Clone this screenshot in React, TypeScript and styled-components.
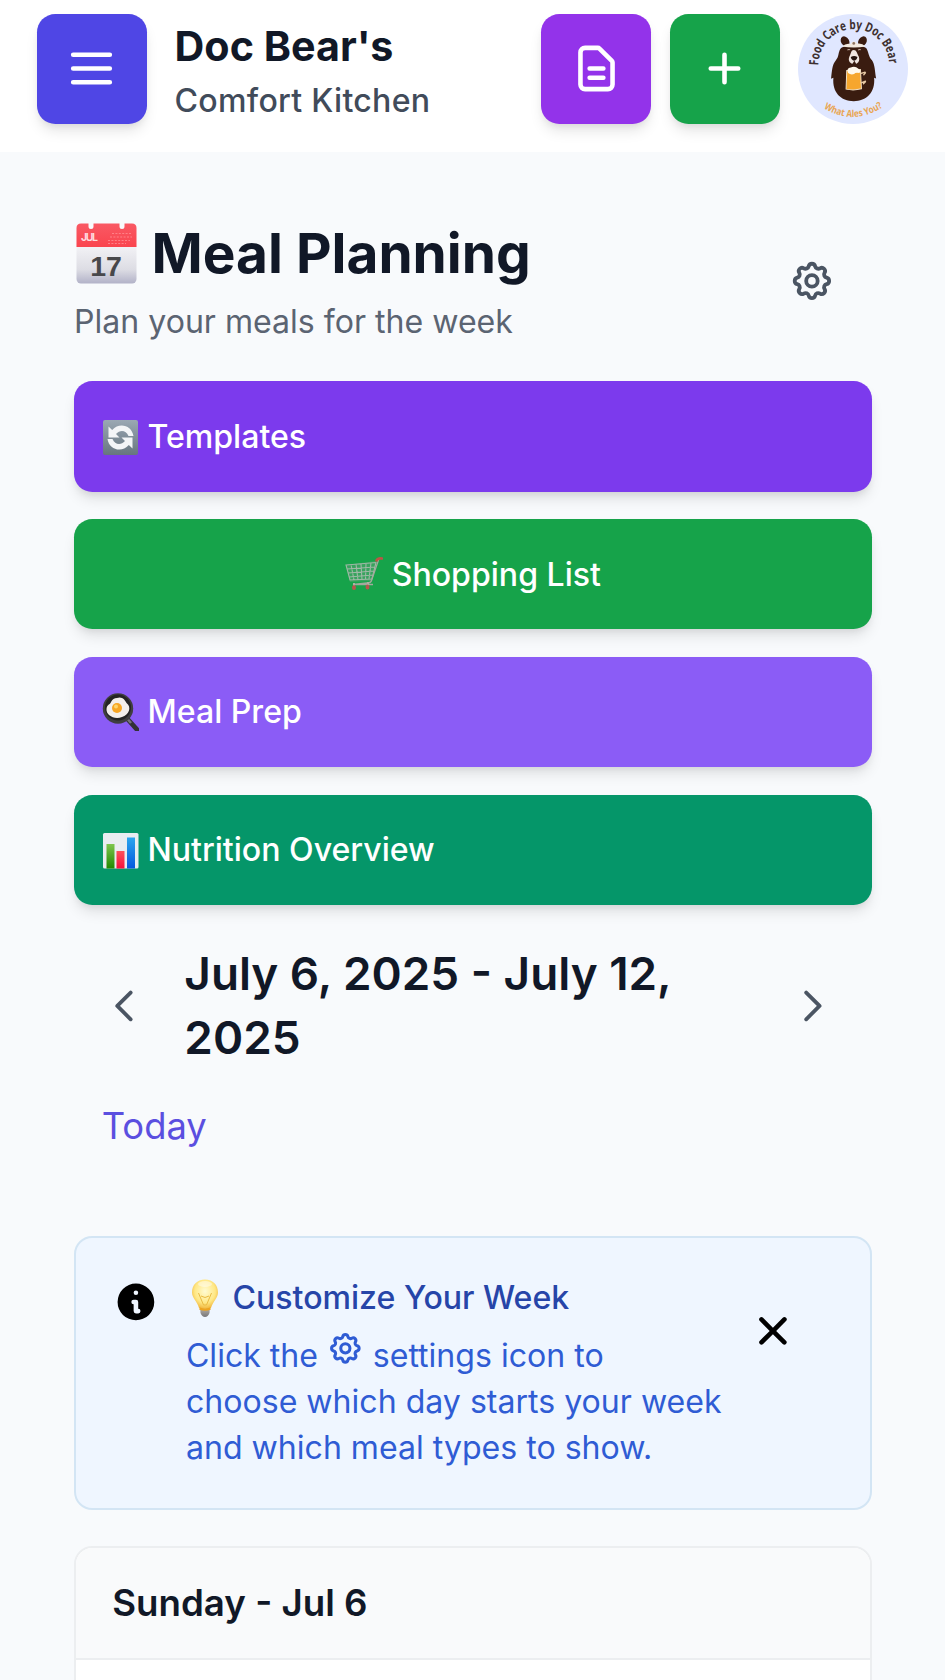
import React from 'react';
import styled, { createGlobalStyle } from 'styled-components';

const GlobalStyle = createGlobalStyle`
  *, *::before, *::after { box-sizing: border-box; }
  body {
    margin: 0;
    background: #f8fafc;
    font-family: Inter, "Liberation Sans", sans-serif;
    color: #111827;
  }
  h1, h2, h3, p { margin: 0; }
  button { border: 0; background: none; padding: 0; font: inherit; color: inherit; }
  svg { display: block; flex-shrink: 0; }
`;

const liftedShadow = '0 9px 14px -2px rgba(0,0,0,0.1), 0 4.6px 9px -4.6px rgba(0,0,0,0.1)';

const Page = styled.div`
  width: 945px;
  height: 1680px;
  overflow: hidden;
`;

const Header = styled.header`
  display: flex;
  align-items: flex-start;
  gap: 18.3px;
  height: 151.5px;
  padding: 14px 36.7px 0;
  background: #fff;
`;

const SquareButton = styled.button<{ $color: string }>`
  display: flex;
  align-items: center;
  justify-content: center;
  flex: none;
  width: 110.2px;
  height: 110.2px;
  padding-bottom: 1.4px;
  border-radius: 18.3px;
  color: #fff;
  background: ${(p) => p.$color};
  box-shadow: ${liftedShadow};
`;

const Brand = styled.div`
  flex: 1;
  padding: 6.5px 0 0 9.4px;
  white-space: nowrap;
`;

const BrandName = styled.h1`
  font-size: 41.25px;
  line-height: 51.6px;
  font-weight: 700;
`;

const BrandTag = styled.p`
  margin-top: 6.2px;
  font-size: 32.1px;
  line-height: 46px;
  font-weight: 500;
  letter-spacing: 0.28px;
  color: #414b5a;
`;

const Avatar = styled.div`
  flex: none;
  width: 110.2px;
  height: 110.2px;
  border-radius: 50%;
  overflow: hidden;
  background: #e0e7ff;
`;

const Main = styled.main`
  padding: 65.2px 73.3px 0 73.5px;
`;

const TitleRow = styled.section`
  display: flex;
  align-items: center;
  justify-content: space-between;
  padding-right: 37px;
  color: #4b5563;
`;

const Title = styled.h2`
  display: flex;
  align-items: center;
  gap: 15px;
  padding-left: 2px;
  font-size: 55px;
  line-height: 73px;
  font-weight: 700;
  color: #111827;
`;

const Subtitle = styled.p`
  margin-top: 9.5px;
  padding-left: 0.5px;
  font-size: 32.1px;
  line-height: 46px;
  color: #5b6472;
`;

const Actions = styled.div`
  display: flex;
  flex-direction: column;
  gap: 27.4px;
  margin-top: 36.3px;
`;

const ActionButton = styled.button<{ $color: string; $centered?: boolean }>`
  display: flex;
  align-items: center;
  justify-content: ${(p) => (p.$centered ? 'center' : 'flex-start')};
  gap: 9px;
  height: 110.3px;
  padding: 0.8px 27.5px 0 28px;
  border-radius: 18.3px;
  font-size: 32.1px;
  line-height: 46px;
  font-weight: 500;
  color: #fff;
  background: ${(p) => p.$color};
  box-shadow: ${liftedShadow};
`;

const WeekNav = styled.div`
  display: flex;
  align-items: center;
  margin-top: 37.1px;
  padding: 0 37px 0 28.2px;
  color: #4b5563;
`;

const WeekRange = styled.h2`
  flex: 1;
  margin-left: 36.8px;
  padding-right: 100px;
  font-size: 45.85px;
  line-height: 64.3px;
  font-weight: 600;
  color: #111827;
`;

const TodayLink = styled.button`
  display: block;
  margin: 28px 0 0 28.2px;
  font-size: 36.4px;
  line-height: 55px;
  color: #5b4fe0;
`;

const Tip = styled.section`
  display: flex;
  align-items: flex-start;
  margin-top: 82.1px;
  height: 274px;
  padding: 37.2px 73.5px 0 37px;
  border: 2px solid #d3e5f4;
  border-radius: 18.3px;
  background: #eff6ff;
`;

const TipIcon = styled.span`
  padding-top: 4.6px;
  color: #000;
`;

const TipBody = styled.div`
  flex: 1;
  margin-left: 27.6px;
  white-space: nowrap;
`;

const TipTitle = styled.h3`
  display: flex;
  align-items: center;
  gap: 9.5px;
  font-size: 32.1px;
  line-height: 46px;
  font-weight: 500;
  color: #2645a8;
`;

const TipText = styled.p`
  margin-top: 9.2px;
  font-size: 32.1px;
  line-height: 46px;
  color: #2f5cd4;
  svg { display: inline-block; vertical-align: baseline; }
`;

const TipClose = styled.button`
  margin-top: 32.8px;
  color: #000;
`;

const DayCard = styled.section`
  height: 220px;
  margin-top: 36.2px;
  border: 2px solid #eceef0;
  border-radius: 18.3px;
  overflow: hidden;
  background: #fff;
`;

const DayHeader = styled.h3`
  padding: 27px 36.7px 28px;
  border-bottom: 2px solid #eceef0;
  background: #f9fafb;
  font-size: 36.7px;
  line-height: 55px;
  font-weight: 600;
`;

type StrokeIconProps = { size: number; paths: string[] };

const StrokeIcon = ({ size, paths }: StrokeIconProps) => (
  <svg width={size} height={size} viewBox="0 0 24 24" fill="none" stroke="currentColor" strokeWidth={2} strokeLinecap="round" strokeLinejoin="round">
    {paths.map((d) => (
      <path key={d} d={d} />
    ))}
  </svg>
);

const SolidIcon = ({ d }: { d: string }) => (
  <svg width={45.85} height={45.85} viewBox="0 0 20 20" fill="currentColor">
    <path fillRule="evenodd" clipRule="evenodd" d={d} />
  </svg>
);

const COG = [
  'M10.325 4.317c.426-1.756 2.924-1.756 3.35 0a1.724 1.724 0 002.573 1.066c1.543-.94 3.31.826 2.37 2.37a1.724 1.724 0 001.065 2.572c1.756.426 1.756 2.924 0 3.35a1.724 1.724 0 00-1.066 2.573c.94 1.543-.826 3.31-2.37 2.37a1.724 1.724 0 00-2.572 1.065c-.426 1.756-2.924 1.756-3.35 0a1.724 1.724 0 00-2.573-1.066c-1.543.94-3.31-.826-2.37-2.37a1.724 1.724 0 00-1.065-2.572c-1.756-.426-1.756-2.924 0-3.35a1.724 1.724 0 001.066-2.573c-.94-1.543.826-3.31 2.37-2.37.996.608 2.296.07 2.572-1.065z',
  'M15 12a3 3 0 11-6 0 3 3 0 016 0z',
];
const MENU = ['M4 6h16M4 12h16M4 18h16'];
const DOCUMENT = [
  'M9 12h6m-6 4h6m2 5H7a2 2 0 01-2-2V5a2 2 0 012-2h5.586a1 1 0 01.707.293l5.414 5.414a1 1 0 01.293.707V19a2 2 0 01-2 2z',
];
const PLUS = ['M12 6v12M6 12h12'];
const PREVIOUS = ['M15 19l-7-7 7-7'];
const NEXT = ['M9 5l7 7-7 7'];
const INFO =
  'M18 10a8 8 0 11-16 0 8 8 0 0116 0zm-7-4a1 1 0 11-2 0 1 1 0 012 0zM9 9a1 1 0 000 2v3a1 1 0 001 1h1a1 1 0 100-2v-3a1 1 0 00-1-1H9z';
const CLOSE =
  'M4.293 4.293a1 1 0 011.414 0L10 8.586l4.293-4.293a1 1 0 111.414 1.414L11.414 10l4.293 4.293a1 1 0 01-1.414 1.414L10 11.414l-4.293 4.293a1 1 0 01-1.414-1.414L8.586 10 4.293 5.707a1 1 0 010-1.414z';

const BearLogo = () => (
  <svg width="100%" height="100%" viewBox="40 42 330 330">
    <defs>
      <path id="logo-top" d="M101 196A106 109 0 0 1 313 196" />
      <path id="logo-bottom" d="M114 322Q207 382 301 316" />
    </defs>
    <text fill="#3d302f" fontFamily="Open Sans, sans-serif" fontWeight={700} fontSize={39}>
      <textPath href="#logo-top" textLength={332} lengthAdjust="spacingAndGlyphs">Food Care by Doc Bear</textPath>
    </text>
    <text fill="#e9a552" fontFamily="Open Sans, sans-serif" fontWeight={700} fontSize={29}>
      <textPath href="#logo-bottom" startOffset={4} textLength={188} lengthAdjust="spacingAndGlyphs">What Ales You?</textPath>
    </text>
    <g fill="#3a1c10">
      <ellipse cx="181" cy="124" rx="12" ry="16" transform="rotate(-32 181 124)" />
      <ellipse cx="233" cy="124" rx="12" ry="16" transform="rotate(32 233 124)" />
      <path d="M165 150C171 136 188 139 207 139C228 139 243 137 248 151C253 164 253 171 261 180C271 193 270 215 274 235L268 233C272 278 244 303 207 303C168 303 142 277 146 233L139 236C142 211 142 194 153 181C162 171 160 162 165 150Z" />
    </g>
    <path d="M172 139Q184 128 198 132A10 10 0 0 1 217 131Q230 128 243 139Q207 145 172 139Z" fill="#f3eadf" />
    <circle cx="207" cy="130" r="4" fill="#8d7261" />
    <path d="M207 150C216 150 216 160 222 169C226 181 221 188 214 191L209 182L203 191C195 188 189 181 194 169C200 160 198 150 207 150Z" fill="#efe5df" />
    <path d="M198 171Q208 165 218 171Q216 181 208 182Q200 181 198 171Z" fill="#23120d" />
    <path d="M188 150q5-4 8 0M220 150q5-4 8 0" stroke="#c9b5a8" strokeWidth="3" fill="none" />
    <path d="M186 211L227 208L230 266Q207 272 184 267Z" fill="#f6a62d" stroke="#f1dfc4" strokeWidth="3" />
    <path d="M190 219Q184 204 198 202Q211 196 221 206Q230 211 224 219Q212 216 208 222Q198 225 190 219Z" fill="#fff8eb" />
    <path d="M229 220L241 216M229 248L242 243M242 218l-5 6M242 245l-6 6" stroke="#e6c9a5" strokeWidth="4" strokeLinecap="round" />
  </svg>
);

const CalendarEmoji = () => (
  <svg width={61} height={62} viewBox="0 -1 61 62">
    <defs>
      <linearGradient id="cal-paper" x1="0" y1="0" x2="0" y2="1">
        <stop offset="0" stopColor="#f5f5f8" />
        <stop offset=".65" stopColor="#dddde4" />
        <stop offset="1" stopColor="#b2b2c8" />
      </linearGradient>
      <linearGradient id="cal-band" x1="0" y1="0" x2="0" y2="1">
        <stop offset="0" stopColor="#f95964" />
        <stop offset="1" stopColor="#fa444e" />
      </linearGradient>
    </defs>
    <path d="M.5 20h60v36a4.500 4.500 0 0 1-4.500 4.500H5A4.500 4.500 0 0 1 .5 56Z" fill="url(#cal-paper)" />
    <path d="M.5 24V5Q.5.500 5 .5H12.500V3.500a2.500 2.500 0 0 0 5 0V.5H43.500V3.500a2.500 2.500 0 0 0 5 0V.5H56Q60.500.500 60.500 5V24Z" fill="url(#cal-band)" />
    <text x="5" y="18" fontFamily="Inter, sans-serif" fontSize="10.500" fontWeight="700" fill="#ffd9dc" textLength="17">JUL</text>
    <path d="M36 10.500h20M34 14h22M32 17.500h22M32 20.500h18" stroke="#ff8087" strokeWidth="1.200" strokeDasharray="2 1.400" />
    <text x="30" y="52.800" textAnchor="middle" fontFamily="Liberation Sans, sans-serif" fontSize="28.500" fontWeight="700" fill="#48484b">17</text>
  </svg>
);

const RefreshEmoji = () => (
  <svg width={37} height={37} viewBox="0 0 37 37">
    <defs>
      <linearGradient id="refresh-tile" x1="0" y1="0" x2="0" y2="1">
        <stop offset="0" stopColor="#9aa8b3" />
        <stop offset="1" stopColor="#67757f" />
      </linearGradient>
    </defs>
    <rect x="1" y="1" width="35" height="35" rx="2" fill="url(#refresh-tile)" />
    <g fill="#f3f5f7">
      <path d="M6.500 7.500V18.500H17.500L14 15C18 10.500 24 11 26.500 17H31.500C30 6.500 17.500 2.500 10.200 11Z" />
      <path d="M30.500 29.500V18.500H19.500L23 22C19 26.500 13 26 10.500 20H5.500C7 30.500 19.500 34.500 26.800 26Z" />
    </g>
  </svg>
);

const CartEmoji = () => (
  <svg width={38} height={37} viewBox="0 0 38 37" fill="none">
    <path d="M1 9L31 5L27 25L5 26Z" fill="#88a68e" fillOpacity=".3" />
    <path d="M1 9L31 6.500L27 23L5 24ZM2 13L30 11M3 17L29 15M4 21L28 19M6 8.500L9 24M11 8L13 24M16 8L17 24M21 7.500L20.500 23.500M26 7L24 23" stroke="#9fb8a6" strokeWidth="1.100" />
    <path d="M34 2.500L26.500 24.500Q26 27 22 27L8 28.500H28" stroke="#a3a99d" strokeWidth="1.300" />
    <path d="M31.500 4.500Q33 1.800 37 2.500" stroke="#bb5545" strokeWidth="2.600" strokeLinecap="round" />
    <path d="M9 27v4M23 26v4" stroke="#aeb0a3" strokeWidth="2" />
    <ellipse cx="9" cy="31.500" rx="2" ry="2.500" fill="#b5574e" />
    <ellipse cx="22.500" cy="31" rx="2" ry="2.500" fill="#b5574e" />
  </svg>
);

const PanEmoji = () => (
  <svg width={37} height={38} viewBox="0 0 37 38">
    <path d="M25.500 26L35 36.500" stroke="#333236" strokeWidth="4.800" strokeLinecap="round" />
    <path d="M25 25.500L29 30" stroke="#77737d" strokeWidth="2.600" />
    <circle cx="16" cy="15.500" r="15.200" fill="#3f3e3f" />
    <circle cx="16" cy="14.500" r="13" fill="#242424" />
    <path d="M15 5C20 3 23 7 24.500 10C30 14 27 22 20 24C12 27 4 22 4.500 16C5 11 8 12 9 9Q11 5 15 5Z" fill="#f3efeb" />
    <circle cx="15" cy="15" r="5" fill="#f7a623" />
    <circle cx="14" cy="13.500" r="2" fill="#fed56b" />
  </svg>
);

const ChartEmoji = () => (
  <svg width={37} height={37} viewBox="0 0 37 37">
    <defs>
      <linearGradient id="bar-green" x1="0" y1="0" x2="0" y2="1">
        <stop offset="0" stopColor="#7ec64e" />
        <stop offset="1" stopColor="#218900" />
      </linearGradient>
      <linearGradient id="bar-red" x1="0" y1="0" x2="0" y2="1">
        <stop offset="0" stopColor="#ff505c" />
        <stop offset="1" stopColor="#f3113c" />
      </linearGradient>
      <linearGradient id="bar-blue" x1="0" y1="0" x2="0" y2="1">
        <stop offset="0" stopColor="#2ba6ee" />
        <stop offset="1" stopColor="#0757df" />
      </linearGradient>
    </defs>
    <rect x="1" y="1" width="35.500" height="35.500" rx="1.500" fill="#e9edf1" />
    <rect x="4.500" y="12" width="8" height="24.500" fill="url(#bar-green)" />
    <rect x="14.500" y="19" width="8" height="17.500" fill="url(#bar-red)" />
    <rect x="25" y="5.500" width="8" height="31" fill="url(#bar-blue)" />
  </svg>
);

const BulbEmoji = () => (
  <svg width={37} height={38} viewBox="0 0 37 38">
    <defs>
      <radialGradient id="bulb-glass" cx=".5" cy=".4" r=".6">
        <stop offset="0" stopColor="#fffbd2" />
        <stop offset=".65" stopColor="#ffe886" />
        <stop offset="1" stopColor="#f0b63c" />
      </radialGradient>
      <linearGradient id="bulb-base" x1="0" y1="0" x2="0" y2="1">
        <stop offset="0" stopColor="#e9ad3a" />
        <stop offset=".4" stopColor="#aaa59d" />
        <stop offset="1" stopColor="#77777b" />
      </linearGradient>
    </defs>
    <path d="M14 26H24L23.500 34Q22 38 19 38Q16 38 14.500 34Z" fill="url(#bulb-base)" />
    <path d="M19 .5C27 .5 32 6 32 13.500C32 19 27 22 25 29Q19 31 13 29C11 22 6 19 6 13.500C6 6 11 .5 19 .5Z" fill="url(#bulb-glass)" />
    <path d="M12.500 14L17.500 26H20.500L25.500 14M15 17l4 1.500 4-1.500" stroke="#e9bb43" strokeWidth="1" fill="none" />
    <path d="M13.500 29.500Q19 32 24.500 29.500" stroke="#eda420" strokeWidth="2" fill="none" />
    <ellipse cx="19" cy="5" rx="7" ry="3" fill="#fff" opacity=".45" />
  </svg>
);

export default function App() {
  return (
    <Page>
      <GlobalStyle />
      <Header>
        <SquareButton $color="#4f46e5" aria-label="Menu">
          <StrokeIcon size={55} paths={MENU} />
        </SquareButton>
        <Brand>
          <BrandName>Doc Bear's</BrandName>
          <BrandTag>Comfort Kitchen</BrandTag>
        </Brand>
        <SquareButton $color="#9333ea" aria-label="Documents">
          <StrokeIcon size={55} paths={DOCUMENT} />
        </SquareButton>
        <SquareButton $color="#16a34a" aria-label="Add">
          <StrokeIcon size={55} paths={PLUS} />
        </SquareButton>
        <Avatar>
          <BearLogo />
        </Avatar>
      </Header>

      <Main>
        <TitleRow>
          <div>
            <Title>
              <CalendarEmoji />
              Meal Planning
            </Title>
            <Subtitle>Plan your meals for the week</Subtitle>
          </div>
          <button aria-label="Settings">
            <StrokeIcon size={45.85} paths={COG} />
          </button>
        </TitleRow>

        <Actions>
          <ActionButton $color="#7c3aed">
            <RefreshEmoji />
            Templates
          </ActionButton>
          <ActionButton $color="#16a34a" $centered>
            <CartEmoji />
            Shopping List
          </ActionButton>
          <ActionButton $color="#8b5cf6">
            <PanEmoji />
            Meal Prep
          </ActionButton>
          <ActionButton $color="#059669">
            <ChartEmoji />
            Nutrition Overview
          </ActionButton>
        </Actions>

        <WeekNav>
          <button aria-label="Previous week">
            <StrokeIcon size={45.85} paths={PREVIOUS} />
          </button>
          <WeekRange>July 6, 2025 - July 12, 2025</WeekRange>
          <button aria-label="Next week">
            <StrokeIcon size={45.85} paths={NEXT} />
          </button>
        </WeekNav>
        <TodayLink>Today</TodayLink>

        <Tip>
          <TipIcon>
            <SolidIcon d={INFO} />
          </TipIcon>
          <TipBody>
            <TipTitle>
              <BulbEmoji />
              Customize Your Week
            </TipTitle>
            <TipText>
              Click the <StrokeIcon size={36.7} paths={COG} /> settings icon to
              <br />
              choose which day starts your week
              <br />
              and which meal types to show.
            </TipText>
          </TipBody>
          <TipClose aria-label="Dismiss">
            <SolidIcon d={CLOSE} />
          </TipClose>
        </Tip>

        <DayCard>
          <DayHeader>Sunday - Jul 6</DayHeader>
        </DayCard>
      </Main>
    </Page>
  );
}
